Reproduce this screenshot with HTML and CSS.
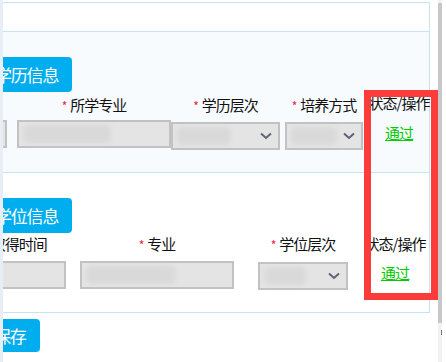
FILE: index.html
```html
<!DOCTYPE html>
<html lang="zh-CN">
<head>
  <meta charset="UTF-8" />
  <meta name="viewport" content="width=device-width, initial-scale=1.0" />
  <title>学历学位信息</title>
  <link rel="stylesheet" href="styles.css">
</head>
<body>
  <div class="strip"></div>

  <div class="main">
    <div class="page">
      <div class="panel">
        <div class="toprow"></div>

        <div class="sec sec-edu">
          <div class="tab">学历信息</div>
          <div class="fields">
            <div class="col" style="width:216px">
              <div class="label"><span class="req">*</span>毕业院校</div>
              <div class="input" style="width:196px"></div>
            </div>
            <div class="col" style="width:154px">
              <div class="label"><span class="req">*</span>所学专业</div>
              <div class="input" style="width:154px"><span class="smudge" style="width:88px"></span></div>
            </div>
            <div class="col" style="width:109px">
              <div class="label"><span class="req">*</span>学历层次</div>
              <div class="select" style="width:109px">
                <span class="smudge" style="width:54px"></span>
                <svg class="chev" width="12" height="8" viewBox="0 0 12 8"><polyline points="1,1.5 6,6 11,1.5" /></svg>
              </div>
            </div>
            <div class="col" style="width:88px">
              <div class="label"><span class="req">*</span>培养方式</div>
              <div class="select" style="width:78px">
                <span class="smudge" style="width:46px"></span>
                <svg class="chev" width="12" height="8" viewBox="0 0 12 8"><polyline points="1,1.5 6,6 11,1.5" /></svg>
              </div>
            </div>
            <div class="col status" style="width:62px">
              <div class="label">状态/操作</div>
              <a class="pass" href="#">通过</a>
            </div>
          </div>
        </div>

        <div class="sec sec-degree">
          <div class="tab">学位信息</div>
          <div class="fields">
            <div class="col" style="width:148px">
              <div class="label"><span class="req">*</span>学位名称</div>
              <div class="input" style="width:120px"></div>
            </div>
            <div class="col" style="width:131px">
              <div class="label"><span class="req">*</span>取得时间</div>
              <div class="input" style="width:103px"></div>
            </div>
            <div class="col" style="width:154px">
              <div class="label"><span class="req">*</span>专业</div>
              <div class="input" style="width:154px"><span class="smudge" style="width:90px"></span></div>
            </div>
            <div class="col" style="width:138px">
              <div class="label"><span class="req">*</span>学位层次</div>
              <div class="select" style="width:90px">
                <span class="smudge" style="width:42px"></span>
                <svg class="chev" width="12" height="8" viewBox="0 0 12 8"><polyline points="1,1.5 6,6 11,1.5" /></svg>
              </div>
            </div>
            <div class="col status" style="width:46px">
              <div class="label">状态/操作</div>
              <a class="pass" href="#">通过</a>
            </div>
          </div>
        </div>
      </div>

      <div class="actions">
        <div class="btn-save">保存</div>
      </div>
    </div>
  </div>

  <!-- 画面上の注目枠 -->
  <div class="highlight"></div>

  <div class="scrollbar">
    <div class="thumb"></div>
    <div class="mark"></div>
  </div>
</body>
</html>
```

FILE: styles.css
```css
body {
  margin: 0;
  height: 362px;
  display: flex;
  background: #fff;
  font-family: "Noto Sans CJK SC", "Noto Sans", sans-serif;
  font-size: 15px;
  letter-spacing: -1px;
  color: #111;
  overflow: hidden;
}

.strip {
  width: 3px;
  flex: none;
  background: #e9eef6;
}

.main {
  flex: 1;
  overflow: hidden;
  padding-top: 2px;
}

/* 横スクロールされた状態を再現 */
.page {
  margin-left: -203px;
  width: 630px;
}

.panel {
  border: 1px solid #c7e2f4;
  box-sizing: border-box;
  width: 630px;
}

.toprow {
  height: 28px;
  border-bottom: 1px solid #c7e2f4;
}

.sec {
  padding-top: 25px;
  box-sizing: border-box;
}

.sec-edu {
  height: 141px;
  background: #f7fbfe;
  border-bottom: 1px solid #c7e2f4;
}

.sec-degree {
  height: 139px;
  background: #fff;
}

.tab {
  margin-left: 179px;
  display: inline-block;
  height: 35px;
  line-height: 35px;
  padding: 0 14px 0 15px;
  font-size: 17px;
  letter-spacing: -1.2px;
  color: #fff;
  background: #00aeef;
  border-radius: 4px;
}

.fields {
  display: flex;
  margin-top: 3px;
}

.sec-degree .fields {
  margin-top: 1px;
}

.col {
  flex: none;
  display: flex;
  flex-direction: column;
  align-items: center;
}

.label {
  height: 20px;
  line-height: 20px;
  white-space: nowrap;
}

.req {
  color: #f0203c;
  font-size: 12px;
  margin-right: 4px;
}

.input, .select {
  flex: none;
  height: 28px;
  box-sizing: border-box;
  background: #e4e4e4;
  border: 2px solid #c2c2c2;
  margin-top: 5px;
  display: flex;
  align-items: center;
  padding: 0 4px;
}

.sec-degree .input {
  margin-top: 7px;
}

.select {
  margin-top: 7px;
  justify-content: space-between;
}

.sec-degree .select {
  margin-top: 8px;
}

.smudge {
  height: 18px;
  background: #d9d9d9;
  border-radius: 6px;
  filter: blur(2px);
}

.chev {
  margin-right: 2px;
}

.chev polyline {
  fill: none;
  stroke: #5c6471;
  stroke-width: 2;
}

.status .label {
  margin-top: -2px;
}

.sec-degree .status .label {
  margin-top: 0;
}

.pass {
  margin-top: 10px;
  line-height: 20px;
  color: #00cc00;
  text-decoration: underline;
  white-space: nowrap;
}

.sec-degree .status .pass {
  margin-top: 9px;
}

.actions {
  padding-top: 6px;
}

.btn-save {
  margin-left: 179px;
  display: inline-block;
  height: 33px;
  line-height: 33px;
  padding: 0 14px 0 15px;
  font-size: 17px;
  letter-spacing: -1.2px;
  color: #fff;
  background: #00aeef;
  border-radius: 4px;
}

.highlight {
  position: absolute;
  left: 364px;
  top: 90px;
  width: 74px;
  height: 210px;
  box-sizing: border-box;
  border: 7px solid #fc3b3b;
}

.scrollbar {
  position: absolute;
  left: 438px;
  top: 0;
  width: 4px;
  height: 362px;
  background: #f1f1f1;
}

.thumb {
  margin-top: 3px;
  height: 320px;
  background: #c8c8c8;
}

.mark {
  margin: 7px 0 0 3px;
  width: 1px;
  height: 5px;
  background: #777;
}
```
